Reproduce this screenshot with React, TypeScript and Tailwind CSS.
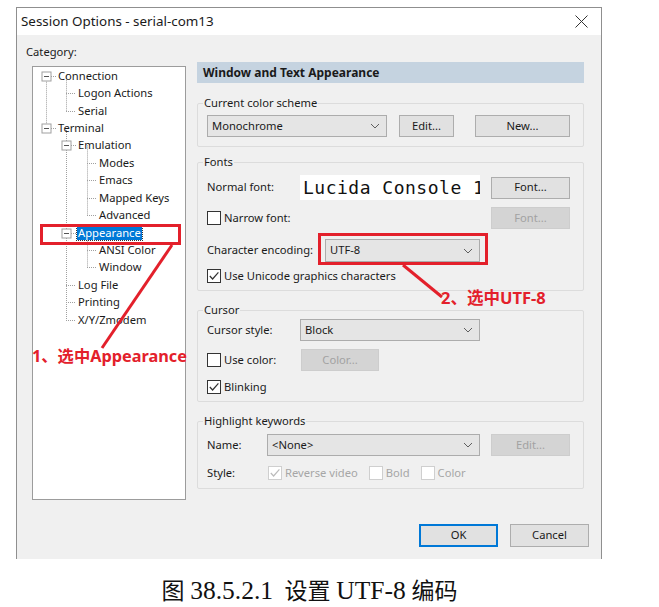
import type { ReactNode } from 'react';

const ui = "font-['Noto_Sans','Noto_Sans_CJK_SC',sans-serif]";

function Chevron() {
  return (
    <svg width="10" height="6" viewBox="0 0 10 6" className="shrink-0">
      <path d="M1 1 L5 5 L9 1" fill="none" stroke="#5f5f5f" strokeWidth="1" />
    </svg>
  );
}

function Dropdown({ value, className }: { value: string; className: string }) {
  return (
    <div
      className={`flex items-center justify-between border border-[#acacac] bg-[#e5e5e5] pl-[4px] pr-[6px] text-[#1a1a1a] ${className}`}
    >
      <span>{value}</span>
      <Chevron />
    </div>
  );
}

function Button({
  label,
  className,
  disabled,
  primary,
}: {
  label: string;
  className: string;
  disabled?: boolean;
  primary?: boolean;
}) {
  let tone = 'border border-[#adadad] bg-[#e1e1e1] text-[#1a1a1a]';
  if (disabled) tone = 'border border-[#cdcdcd] bg-[#d4d4d4] text-[#a2a2a2]';
  if (primary) tone = 'border-2 border-[#0078d7] bg-[#e1e1e1] text-[#1a1a1a]';
  return (
    <div className={`flex shrink-0 items-center justify-center ${tone} ${className}`}>
      {label}
    </div>
  );
}

function Check({ checked, disabled }: { checked?: boolean; disabled?: boolean }) {
  return (
    <span
      className={`flex h-[14px] w-[14px] shrink-0 items-center justify-center border ${
        disabled ? 'border-[#cfcfcf] bg-white' : 'border-[#333333] bg-white'
      }`}
    >
      {checked && (
        <svg width="12" height="12" viewBox="0 0 12 12">
          <path
            d="M1.8 6 L4.6 9 L10.4 2.4"
            fill="none"
            stroke={disabled ? '#bcbcbc' : '#333333'}
            strokeWidth="1.2"
          />
        </svg>
      )}
    </span>
  );
}

function Group({ title, className, children }: { title: string; className?: string; children: ReactNode }) {
  return (
    <fieldset className={`rounded-[2px] border border-[#dcdcdc] pl-[9px] pr-[13px] ${className ?? ''}`}>
      <legend className="-ml-[4px] px-[1px] leading-[16px] text-[#1a1a1a]">{title}</legend>
      {children}
    </fieldset>
  );
}

type Node = { label: string; level: number; box?: boolean; selected?: boolean };

const tree: Node[] = [
  { label: 'Connection', level: 1, box: true },
  { label: 'Logon Actions', level: 2 },
  { label: 'Serial', level: 2 },
  { label: 'Terminal', level: 1, box: true },
  { label: 'Emulation', level: 2, box: true },
  { label: 'Modes', level: 3 },
  { label: 'Emacs', level: 3 },
  { label: 'Mapped Keys', level: 3 },
  { label: 'Advanced', level: 3 },
  { label: 'Appearance', level: 2, box: true, selected: true },
  { label: 'ANSI Color', level: 3 },
  { label: 'Window', level: 3 },
  { label: 'Log File', level: 2 },
  { label: 'Printing', level: 2 },
  { label: 'X/Y/Zmodem', level: 2 },
];

const ROW = 17.43;
const lineX = [0, 13, 33, 54];
const textX = [0, 24, 44, 65];
const rowY = (i: number) => ROW / 2 + i * ROW;

function TreeLines() {
  const dot = { stroke: '#a0a0a0', strokeWidth: 1, strokeDasharray: '1 1' };
  const verticals: [number, number, number][] = [
    [13, 0, 3],
    [33, 0, 2],
    [33, 3, 14],
    [54, 4, 8],
    [54, 9, 11],
  ];
  return (
    <svg className="pointer-events-none absolute inset-0" width="152" height="432">
      {verticals.map(([x, a, b], i) => (
        <line key={i} x1={x + 0.5} y1={rowY(a)} x2={x + 0.5} y2={rowY(b) + 0.5} {...dot} />
      ))}
      {tree.map((n, i) => {
        const y = Math.round(rowY(i)) + 0.5;
        const x = lineX[n.level];
        return (
          <g key={n.label}>
            <line x1={x + (n.box ? 5 : 0)} y1={y} x2={textX[n.level] - 1} y2={y} {...dot} />
            {n.box && (
              <g>
                <rect x={x - 4} y={y - 4.5} width="9" height="9" fill="white" stroke="#a0a0a0" strokeWidth="1" />
                <line x1={x - 2} y1={y} x2={x + 3} y2={y} stroke="#555" strokeWidth="1" />
              </g>
            )}
          </g>
        );
      })}
    </svg>
  );
}

function Tree() {
  return (
    <div className="relative ml-[1px] h-[434px] w-[154px] border border-[#9c9c9c] bg-white">
      <TreeLines />
      {tree.map((n) => (
        <div
          key={n.label}
          className={`relative flex h-[17.43px] items-center ${
            n.level === 1 ? 'pl-[24px]' : n.level === 2 ? 'pl-[44px]' : 'pl-[65px]'
          }`}
        >
          <span
            className={`px-[1px] leading-[14px] ${
              n.selected ? 'bg-[#0078d7] text-white outline outline-1 outline-dotted outline-[#333]' : 'text-[#1a1a1a]'
            }`}
          >
            {n.label}
          </span>
        </div>
      ))}
    </div>
  );
}

function Annotations() {
  const red = '#e3202b';
  return (
    <>
      <svg className="pointer-events-none absolute inset-0" width="586" height="553">
        <rect x="24.5" y="217.5" width="138" height="18" fill="none" stroke={red} strokeWidth="3" />
        <rect x="302.5" y="226.5" width="167" height="29" fill="none" stroke={red} strokeWidth="3" />
        <line x1="155" y1="237" x2="85" y2="340" stroke={red} strokeWidth="3" />
        <line x1="386" y1="257" x2="425" y2="289" stroke={red} strokeWidth="3" />
      </svg>
      <div className="absolute left-[15px] top-[338px] whitespace-nowrap text-[16.3px] font-bold leading-[20px] text-[#e3202b]">
        1、选中Appearance
      </div>
      <div className="absolute left-[424px] top-[280px] whitespace-nowrap text-[16.5px] font-bold leading-[20px] text-[#e3202b]">
        2、选中UTF-8
      </div>
    </>
  );
}

export default function App() {
  return (
    <div className={`h-[607px] w-[659px] overflow-hidden bg-white pt-[7px] ${ui} text-[11.2px]`}>
      <div className="relative ml-[16px] w-[586px] border-x border-t border-[#8f8f8f]">
        <div className="flex h-[27px] items-center justify-between bg-white pl-[4px] pr-[13px]">
          <span className="text-[13.4px] text-[#1a1a1a]">Session Options - serial-com13</span>
          <svg width="13" height="13" viewBox="0 0 13 13">
            <path d="M0.5 0.5 L12.5 12.5 M12.5 0.5 L0.5 12.5" stroke="#333" strokeWidth="1" />
          </svg>
        </div>

        <div className="flex flex-col bg-[#f0f0f0] pb-[12px]">
          <div className="flex">
            <div className="flex flex-col pl-[14px] pt-[9px]">
              <span className="-ml-[5px] leading-[16px] text-[#1a1a1a]">Category:</span>
              <div className="mt-[6px]">
                <Tree />
              </div>
            </div>

            <div className="ml-[11px] flex w-[387px] flex-col pt-[27px]">
              <div className="flex h-[21px] items-center bg-[#c5d3e0] pl-[6px] text-[12px] font-bold text-[#1a1a1a]">
                Window and Text Appearance
              </div>

              <Group title="Current color scheme" className="mt-[12px] pb-[9px]">
                <div className="mt-[4px] flex items-center">
                  <Dropdown value="Monochrome" className="h-[22px] w-[180px]" />
                  <Button label="Edit..." className="ml-[12px] h-[22px] w-[55px]" />
                  <div className="flex-1" />
                  <Button label="New..." className="h-[22px] w-[95px]" />
                </div>
              </Group>

              <Group title="Fonts" className="mt-[7px] pb-[7px]">
                <div className="mt-[5px] flex h-[25px] items-center">
                  <span className="w-[93px] text-[#1a1a1a]">Normal font:</span>
                  <div className="flex h-[25px] w-[180px] items-center overflow-hidden whitespace-nowrap bg-white pl-[3px] font-['DejaVu_Sans_Mono',monospace] text-[18px] tracking-[0.5px] text-[#111]">
                    Lucida Console 12
                  </div>
                  <div className="flex-1" />
                  <Button label="Font..." className="h-[22px] w-[79px]" />
                </div>
                <div className="mt-[7px] flex h-[22px] items-center">
                  <Check />
                  <span className="ml-[3px] text-[#1a1a1a]">Narrow font:</span>
                  <div className="flex-1" />
                  <Button label="Font..." disabled className="h-[22px] w-[79px]" />
                </div>
                <div className="mt-[10px] flex h-[23px] items-center">
                  <span className="w-[118px] text-[#1a1a1a]">Character encoding:</span>
                  <Dropdown value="UTF-8" className="h-[23px] w-[155px]" />
                </div>
                <div className="mt-[7px] flex h-[14px] items-center">
                  <Check checked />
                  <span className="ml-[3px] text-[#1a1a1a]">Use Unicode graphics characters</span>
                </div>
              </Group>

              <Group title="Cursor" className="mt-[11px] pb-[7px]">
                <div className="mt-[1px] flex h-[22px] items-center">
                  <span className="w-[93px] text-[#1a1a1a]">Cursor style:</span>
                  <Dropdown value="Block" className="h-[22px] w-[180px]" />
                </div>
                <div className="mt-[8px] flex h-[22px] items-center">
                  <div className="flex w-[94px] items-center">
                    <Check />
                    <span className="ml-[3px] text-[#1a1a1a]">Use color:</span>
                  </div>
                  <Button label="Color..." disabled className="h-[22px] w-[78px]" />
                </div>
                <div className="mt-[9px] flex h-[14px] items-center">
                  <Check checked />
                  <span className="ml-[3px] text-[#1a1a1a]">Blinking</span>
                </div>
              </Group>

              <Group title="Highlight keywords" className="mt-[11px] pb-[8px]">
                <div className="mt-[5px] flex h-[22px] items-center">
                  <span className="w-[60px] text-[#1a1a1a]">Name:</span>
                  <Dropdown value="<None>" className="h-[22px] w-[213px]" />
                  <div className="flex-1" />
                  <Button label="Edit..." disabled className="h-[22px] w-[79px]" />
                </div>
                <div className="mt-[10px] flex h-[14px] items-center">
                  <span className="w-[61px] text-[#1a1a1a]">Style:</span>
                  <Check checked disabled />
                  <span className="ml-[3px] text-[#a6a6a6]">Reverse video</span>
                  <span className="ml-[11px]">
                    <Check disabled />
                  </span>
                  <span className="ml-[3px] text-[#a6a6a6]">Bold</span>
                  <span className="ml-[11px]">
                    <Check disabled />
                  </span>
                  <span className="ml-[3px] text-[#a6a6a6]">Color</span>
                </div>
              </Group>
            </div>
          </div>

          <div className="mt-[24px] flex justify-end gap-[12px] pr-[12px]">
            <Button label="OK" primary className="h-[23px] w-[79px]" />
            <Button label="Cancel" className="h-[23px] w-[79px]" />
          </div>
        </div>

        <Annotations />
      </div>

      <div className="mt-[18px] flex justify-center pr-[40px]">
        <span className="whitespace-pre font-['Liberation_Serif','Noto_Sans_CJK_SC',serif] text-[23px] leading-[28px] text-[#111]">
          图 <span className="text-[25.5px]">38.5.2.1</span>
          {'  '}设置 <span className="text-[25.5px]">UTF-8</span> 编码
        </span>
      </div>
    </div>
  );
}
